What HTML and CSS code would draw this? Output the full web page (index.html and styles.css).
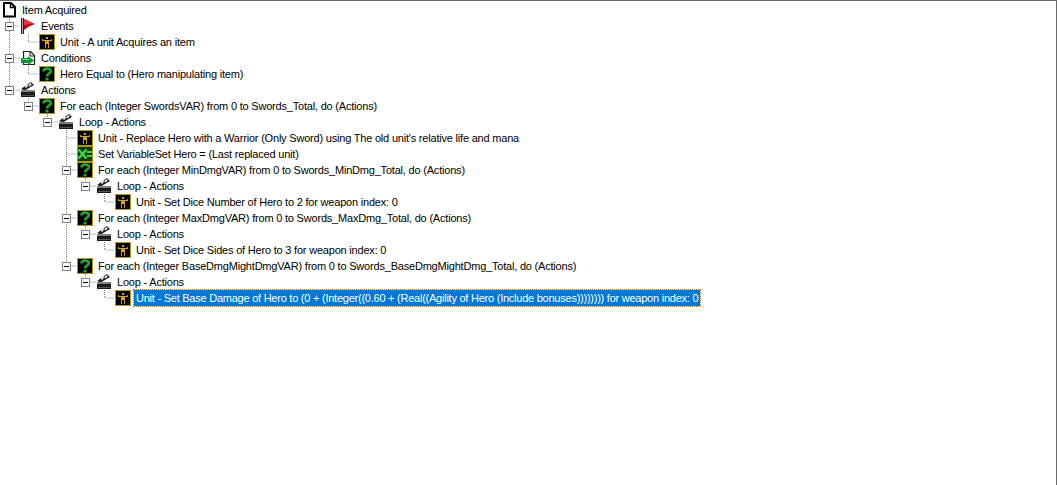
FILE: index.html
```html
<!DOCTYPE html>
<html lang="en">
<head>
<meta charset="utf-8">
<title>Item Acquired</title>
<link rel="stylesheet" href="styles.css">
</head>
<body>
<svg class="defs" width="0" height="0" aria-hidden="true">
  <symbol id="i-page" viewBox="0 0 16 16">
    <path d="M3 1H10L14 5V14.500H3Z" fill="#fff" stroke="#000" stroke-width="2"/>
    <path d="M9.500 1V5.500H14" fill="none" stroke="#000" stroke-width="1.500"/>
  </symbol>
  <symbol id="i-flag" viewBox="0 0 16 16">
    <rect x="1" y="0" width="3" height="16" fill="#222"/>
    <rect x="2" y="0" width="1" height="16" fill="#aaa"/>
    <path d="M4 1L15 6L9 8.500L4 12Z" fill="#c00818"/>
    <path d="M4 1L13 5.500L4 7Z" fill="#f03038"/>
  </symbol>
  <symbol id="i-cond" viewBox="0 0 16 16">
    <path d="M3.500 1.500H10.500L14.500 5.500V14.500H3.500Z" fill="#f4f4f4" stroke="#222" stroke-width="1.200"/>
    <path d="M10 1.500V6H14.500" fill="none" stroke="#222"/>
    <rect x="1" y="8" width="8" height="5" fill="#109030"/>
    <path d="M8 6L14 10.500L8 15Z" fill="#109030"/>
    <rect x="2" y="9" width="7" height="1" fill="#60e070"/>
  </symbol>
  <symbol id="i-clap" viewBox="0 0 16 16">
    <path d="M1.500 6.500L11 0L14 3L4 9Z" fill="#222"/>
    <path d="M5.500 5.500L7.500 2.500M9 4L11 1.500" stroke="#e8e8e8" stroke-width="2"/>
    <rect x="1" y="8" width="14" height="7" fill="#1a1a1a"/>
    <rect x="1" y="8" width="14" height="2" fill="#808080"/>
    <rect x="2" y="13" width="12" height="1" fill="#555"/>
  </symbol>
  <symbol id="i-unit" viewBox="0 0 16 16">
    <rect x="0" y="0" width="16" height="16" fill="#b8960c"/>
    <rect x="1" y="1" width="14" height="14" fill="#000"/>
    <rect x="7" y="3" width="2" height="2" fill="#d8a018"/>
    <path d="M3 5H4V6H12V5H13V7H10V14H9V10H7V14H6V7H3Z" fill="#d8a018"/>
  </symbol>
  <symbol id="i-ques" viewBox="0 0 16 16">
    <rect x="0" y="0" width="16" height="16" fill="#b8960c"/>
    <rect x="1" y="1" width="14" height="14" fill="#000"/>
    <path d="M4.500 5.500C4.500 1.500 11.800 1.500 11.800 5.200C11.800 7.800 8 7.500 8 10.500" fill="none" stroke="#1fa82a" stroke-width="2.600"/>
    <rect x="6.500" y="11.800" width="3" height="2.600" fill="#1fa82a"/>
  </symbol>
  <symbol id="i-set" viewBox="0 0 16 16">
    <rect x="0" y="0" width="16" height="16" fill="#b8960c"/>
    <rect x="1" y="1" width="14" height="14" fill="#0c3a0c"/>
    <path d="M1.500 3.500L9.500 12.500M9.500 3.500L1.500 12.500" stroke="#38d838" stroke-width="2.600"/>
    <path d="M10 6H15M10 10H15" stroke="#38d838" stroke-width="2"/>
  </symbol>
</svg>
<main class="pane">
  <svg class="guides" width="1057" height="320" aria-hidden="true">
    <path d="M9.500 17V90M9.500 26H20M9.500 58H20M9.500 90H20M28.500 34V42H39M28.500 66V74H39M28.500 98V106H39M47.500 114V122H58M66.500 130V266M66.500 138H77M66.500 154H77M66.500 170H77M66.500 218H77M66.500 266H77M85.500 178V186H96M85.500 226V234H96M85.500 274V282H96M104.500 194V202H115M104.500 242V250H115M104.500 290V298H115"/>
  </svg>
  <div class="tree">
    <div class="row root"><svg class="ico"><use href="#i-page"/></svg><span class="lbl">Item Acquired</span></div>
    <div class="row d1"><span class="exp"></span><svg class="ico"><use href="#i-flag"/></svg><span class="lbl">Events</span></div>
    <div class="row d2"><span class="noexp"></span><svg class="ico"><use href="#i-unit"/></svg><span class="lbl">Unit - A unit Acquires an item</span></div>
    <div class="row d1"><span class="exp"></span><svg class="ico"><use href="#i-cond"/></svg><span class="lbl">Conditions</span></div>
    <div class="row d2"><span class="noexp"></span><svg class="ico"><use href="#i-ques"/></svg><span class="lbl">Hero Equal to (Hero manipulating item)</span></div>
    <div class="row d1"><span class="exp"></span><svg class="ico"><use href="#i-clap"/></svg><span class="lbl">Actions</span></div>
    <div class="row d2"><span class="exp"></span><svg class="ico"><use href="#i-ques"/></svg><span class="lbl">For each (Integer SwordsVAR) from 0 to Swords_Total, do (Actions)</span></div>
    <div class="row d3"><span class="exp"></span><svg class="ico"><use href="#i-clap"/></svg><span class="lbl">Loop - Actions</span></div>
    <div class="row d4"><span class="noexp"></span><svg class="ico"><use href="#i-unit"/></svg><span class="lbl">Unit - Replace Hero with a Warrior (Only Sword) using The old unit's relative life and mana</span></div>
    <div class="row d4"><span class="noexp"></span><svg class="ico"><use href="#i-set"/></svg><span class="lbl">Set VariableSet Hero = (Last replaced unit)</span></div>
    <div class="row d4"><span class="exp"></span><svg class="ico"><use href="#i-ques"/></svg><span class="lbl">For each (Integer MinDmgVAR) from 0 to Swords_MinDmg_Total, do (Actions)</span></div>
    <div class="row d5"><span class="exp"></span><svg class="ico"><use href="#i-clap"/></svg><span class="lbl">Loop - Actions</span></div>
    <div class="row d6"><span class="noexp"></span><svg class="ico"><use href="#i-unit"/></svg><span class="lbl">Unit - Set Dice Number of Hero to 2 for weapon index: 0</span></div>
    <div class="row d4"><span class="exp"></span><svg class="ico"><use href="#i-ques"/></svg><span class="lbl">For each (Integer MaxDmgVAR) from 0 to Swords_MaxDmg_Total, do (Actions)</span></div>
    <div class="row d5"><span class="exp"></span><svg class="ico"><use href="#i-clap"/></svg><span class="lbl">Loop - Actions</span></div>
    <div class="row d6"><span class="noexp"></span><svg class="ico"><use href="#i-unit"/></svg><span class="lbl">Unit - Set Dice Sides of Hero to 3 for weapon index: 0</span></div>
    <div class="row d4"><span class="exp"></span><svg class="ico"><use href="#i-ques"/></svg><span class="lbl">For each (Integer BaseDmgMightDmgVAR) from 0 to Swords_BaseDmgMightDmg_Total, do (Actions)</span></div>
    <div class="row d5"><span class="exp"></span><svg class="ico"><use href="#i-clap"/></svg><span class="lbl">Loop - Actions</span></div>
    <div class="row d6"><span class="noexp"></span><svg class="ico"><use href="#i-unit"/></svg><span class="lbl sel">Unit - Set Base Damage of Hero to (0 + (Integer((0.60 + (Real((Agility of Hero (Include bonuses)))))))) for weapon index: 0</span></div>
  </div>
</main>
</body>
</html>
```
FILE: styles.css
```css
html, body {
  margin: 0;
  padding: 0;
  background: #fff;
}
.defs {
  position: absolute;
}
.pane {
  position: relative;
  box-sizing: border-box;
  height: 485px;
  overflow: hidden;
  background: #fff;
  border-top: 1px solid #696969;
  border-right: 1px solid #696969;
  padding-top: 1px;
  font-family: "Liberation Sans", Arial, sans-serif;
  font-size: 11px;
  color: #000;
}
.guides {
  position: absolute;
  left: 0;
  top: -1px;
}
.guides path {
  fill: none;
  stroke: #808080;
  stroke-width: 1;
  stroke-dasharray: 1 1;
}
.tree {
  position: relative;
  display: flex;
  flex-direction: column;
}
.row {
  display: flex;
  align-items: center;
  height: 16px;
  white-space: nowrap;
}
.root { padding-left: 1px; }
.d1 { padding-left: 5px; }
.d2 { padding-left: 24px; }
.d3 { padding-left: 43px; }
.d4 { padding-left: 62px; }
.d5 { padding-left: 81px; }
.d6 { padding-left: 100px; }
.exp, .noexp {
  box-sizing: border-box;
  flex: none;
  width: 9px;
  height: 9px;
  margin-right: 6px;
}
.exp {
  position: relative;
  background: #fff;
  border: 1px solid #808080;
}
.exp::after {
  content: "";
  position: absolute;
  left: 1px;
  top: 3px;
  width: 5px;
  height: 1px;
  background: #000;
}
.ico {
  flex: none;
  width: 16px;
  height: 16px;
}
.lbl {
  margin-left: 3px;
  padding: 0 2px;
  line-height: 16px;
  letter-spacing: -0.2px;
}
.lbl.sel {
  background: #0078d7;
  color: #fff;
  outline: 1px dotted #b87018;
  letter-spacing: -0.24px;
}
```
